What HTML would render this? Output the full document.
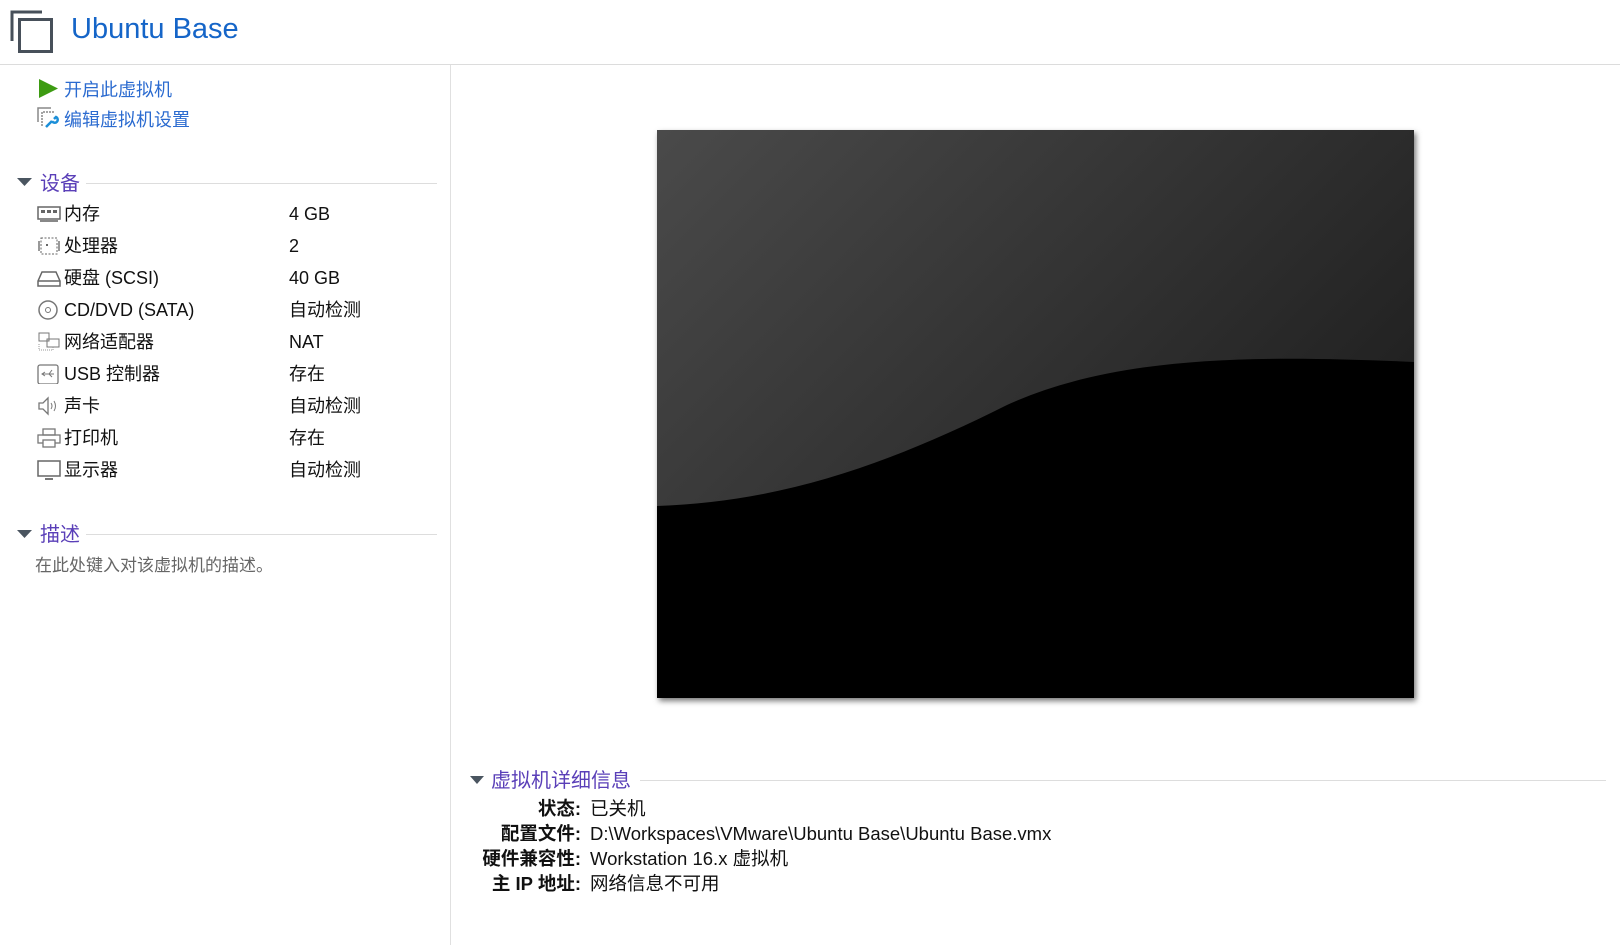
<!DOCTYPE html>
<html><head><meta charset="utf-8"><style>
*{margin:0;padding:0;box-sizing:border-box}
body{width:1620px;height:945px;background:#fff;font-family:"Liberation Sans","Noto Sans CJK SC",sans-serif;position:relative;overflow:hidden;color:#111}
.a{position:absolute;white-space:nowrap}
.row{position:absolute;left:37px;width:400px;height:28px;font-size:18px;line-height:28px;white-space:nowrap}
.row svg{position:absolute;left:0;top:4px}
.row .l{position:absolute;left:27px;white-space:nowrap}
.row .v{position:absolute;left:252px;white-space:nowrap}
.h{font-size:20px;color:#5a3fb8}
.d{position:absolute;font-size:18.5px;line-height:24px;white-space:nowrap}
.d b{position:absolute;right:1039px;width:140px;text-align:right}
</style></head><body>
<svg class="a" style="left:10px;top:10px" width="45" height="45" viewBox="0 0 45 45"><path d="M2 31V2h30" fill="none" stroke="#47505a" stroke-width="3"/><rect x="9.5" y="9.5" width="32" height="32" fill="none" stroke="#47505a" stroke-width="3"/></svg>
<div class="a" style="left:71px;top:13px;font-size:29px;color:#1565c8">Ubuntu Base</div>
<div class="a" style="left:0;top:64px;width:1620px;height:1px;background:#dcdcdc"></div>
<div class="a" style="left:450px;top:65px;width:1px;height:880px;background:#e0e0e0"></div>

<svg class="a" style="left:39px;top:79px" width="20" height="19"><path d="M0 0L19 9.5L0 19Z" fill="#3d9b12"/></svg>
<div class="a" style="left:64px;top:76px;font-size:18px;color:#2b6bd0">开启此虚拟机</div>
<svg class="a" style="left:37px;top:107px" width="24" height="22"><path d="M1 15V1h13" fill="none" stroke="#888" stroke-width="1.5"/><path d="M5 19V5h13" fill="none" stroke="#888" stroke-width="1.5" stroke-dasharray="2 1"/><path d="M9 20l6-6M15 14a3 3 0 1 0 4-4l-2 2" stroke="#1c8fd8" stroke-width="2.5" fill="none"/></svg>
<div class="a" style="left:64px;top:106px;font-size:18px;color:#2b6bd0">编辑虚拟机设置</div>

<svg class="a" style="left:17px;top:178px" width="15" height="9"><path d="M0 0H15L7.5 8Z" fill="#4a5560"/></svg>
<div class="a h" style="left:40px;top:167px">设备</div>
<div class="a" style="left:86px;top:183px;width:351px;height:1px;background:#ddd"></div>

<div class="row" style="top:200px"><svg width="24" height="20"><rect x="1" y="3" width="22" height="12" fill="none" stroke="#666" stroke-width="1.5"/><rect x="4" y="6" width="4" height="3" fill="#666"/><rect x="10" y="6" width="4" height="3" fill="#666"/><rect x="16" y="6" width="4" height="3" fill="#666"/><path d="M3 17h18" stroke="#888" stroke-width="2"/></svg><span class="l">内存</span><span class="v">4 GB</span></div>
<div class="row" style="top:232px"><svg width="24" height="20"><rect x="4" y="2" width="16" height="16" fill="none" stroke="#666" stroke-dasharray="2 1.5"/><rect x="1" y="5" width="2" height="10" fill="#999"/><rect x="21" y="5" width="2" height="10" fill="#999"/><rect x="9" y="8" width="2" height="2" fill="#666"/></svg><span class="l">处理器</span><span class="v">2</span></div>
<div class="row" style="top:264px"><svg width="24" height="20"><path d="M5 4h14l4 9v5H1v-5z" fill="none" stroke="#666" stroke-width="1.5"/><path d="M1 13h22" stroke="#666" stroke-width="1.5"/></svg><span class="l">硬盘 (SCSI)</span><span class="v">40 GB</span></div>
<div class="row" style="top:296px"><svg width="24" height="20"><circle cx="11" cy="10" r="9" fill="none" stroke="#777" stroke-width="1.5"/><circle cx="11" cy="10" r="2.5" fill="none" stroke="#777"/></svg><span class="l">CD/DVD (SATA)</span><span class="v">自动检测</span></div>
<div class="row" style="top:328px"><svg width="24" height="20"><rect x="2" y="1" width="10" height="8" fill="none" stroke="#777"/><rect x="10" y="7" width="12" height="8" fill="none" stroke="#777"/><path d="M2 12v6h14M16 15v3" stroke="#999" stroke-dasharray="1 1" fill="none"/></svg><span class="l">网络适配器</span><span class="v">NAT</span></div>
<div class="row" style="top:360px"><svg width="24" height="20"><rect x="1" y="1" width="20" height="19" rx="2" fill="none" stroke="#777" stroke-width="1.3"/><path d="M5 10h12M8 8l-3 2 3 2M12 10l3-4M12 10l3 3" stroke="#777" fill="none"/></svg><span class="l">USB 控制器</span><span class="v">存在</span></div>
<div class="row" style="top:392px"><svg width="24" height="20"><path d="M2 7h4l5-5v16l-5-5H2z" fill="none" stroke="#777" stroke-width="1.3"/><path d="M14 7q2 3 0 6M17 5q3 5 0 10" stroke="#777" fill="none"/></svg><span class="l">声卡</span><span class="v">自动检测</span></div>
<div class="row" style="top:424px"><svg width="24" height="20"><rect x="6" y="1" width="12" height="6" fill="none" stroke="#777" stroke-width="1.3"/><rect x="1" y="7" width="22" height="8" fill="none" stroke="#777" stroke-width="1.3"/><rect x="6" y="12" width="12" height="7" fill="#fff" stroke="#777" stroke-width="1.3"/></svg><span class="l">打印机</span><span class="v">存在</span></div>
<div class="row" style="top:456px"><svg width="24" height="20"><rect x="1" y="1" width="22" height="15" fill="none" stroke="#666" stroke-width="1.5"/><path d="M8 19h8" stroke="#777" stroke-width="2"/></svg><span class="l">显示器</span><span class="v">自动检测</span></div>

<svg class="a" style="left:17px;top:530px" width="15" height="9"><path d="M0 0H15L7.5 8Z" fill="#4a5560"/></svg>
<div class="a h" style="left:40px;top:518px">描述</div>
<div class="a" style="left:86px;top:534px;width:351px;height:1px;background:#ddd"></div>
<div class="a" style="left:35px;top:551px;font-size:17px;color:#666">在此处键入对该虚拟机的描述。</div>

<svg class="a" style="left:650px;top:124px" width="780" height="590">
<defs><linearGradient id="g" x1="0" y1="0" x2="1" y2="0.75"><stop offset="0" stop-color="#4a4a4a"/><stop offset="1" stop-color="#1a1a1a"/></linearGradient>
<filter id="s" x="-5%" y="-5%" width="110%" height="110%"><feGaussianBlur stdDeviation="3"/></filter></defs>
<rect x="9" y="9" width="757" height="568" fill="#777" filter="url(#s)"/>
<g transform="translate(7,6)">
<rect width="757" height="568" fill="url(#g)"/>
<path d="M0 376C130 372 240 330 350 275C460 225 600 225 757 232V568H0Z" fill="#000"/>
</g></svg>

<svg class="a" style="left:470px;top:776px" width="14" height="9"><path d="M0 0H14L7 8Z" fill="#4a5560"/></svg>
<div class="a h" style="left:491px;top:764px">虚拟机详细信息</div>
<div class="a" style="left:640px;top:780px;width:966px;height:1px;background:#ddd"></div>

<div class="d" style="left:0;top:797px;width:1620px"><b>状态:</b><span style="position:absolute;left:590px">已关机</span></div>
<div class="d" style="left:0;top:822px;width:1620px"><b>配置文件:</b><span style="position:absolute;left:590px">D:\Workspaces\VMware\Ubuntu Base\Ubuntu Base.vmx</span></div>
<div class="d" style="left:0;top:847px;width:1620px"><b>硬件兼容性:</b><span style="position:absolute;left:590px">Workstation 16.x 虚拟机</span></div>
<div class="d" style="left:0;top:872px;width:1620px"><b>主 IP 地址:</b><span style="position:absolute;left:590px">网络信息不可用</span></div>
</body></html>
